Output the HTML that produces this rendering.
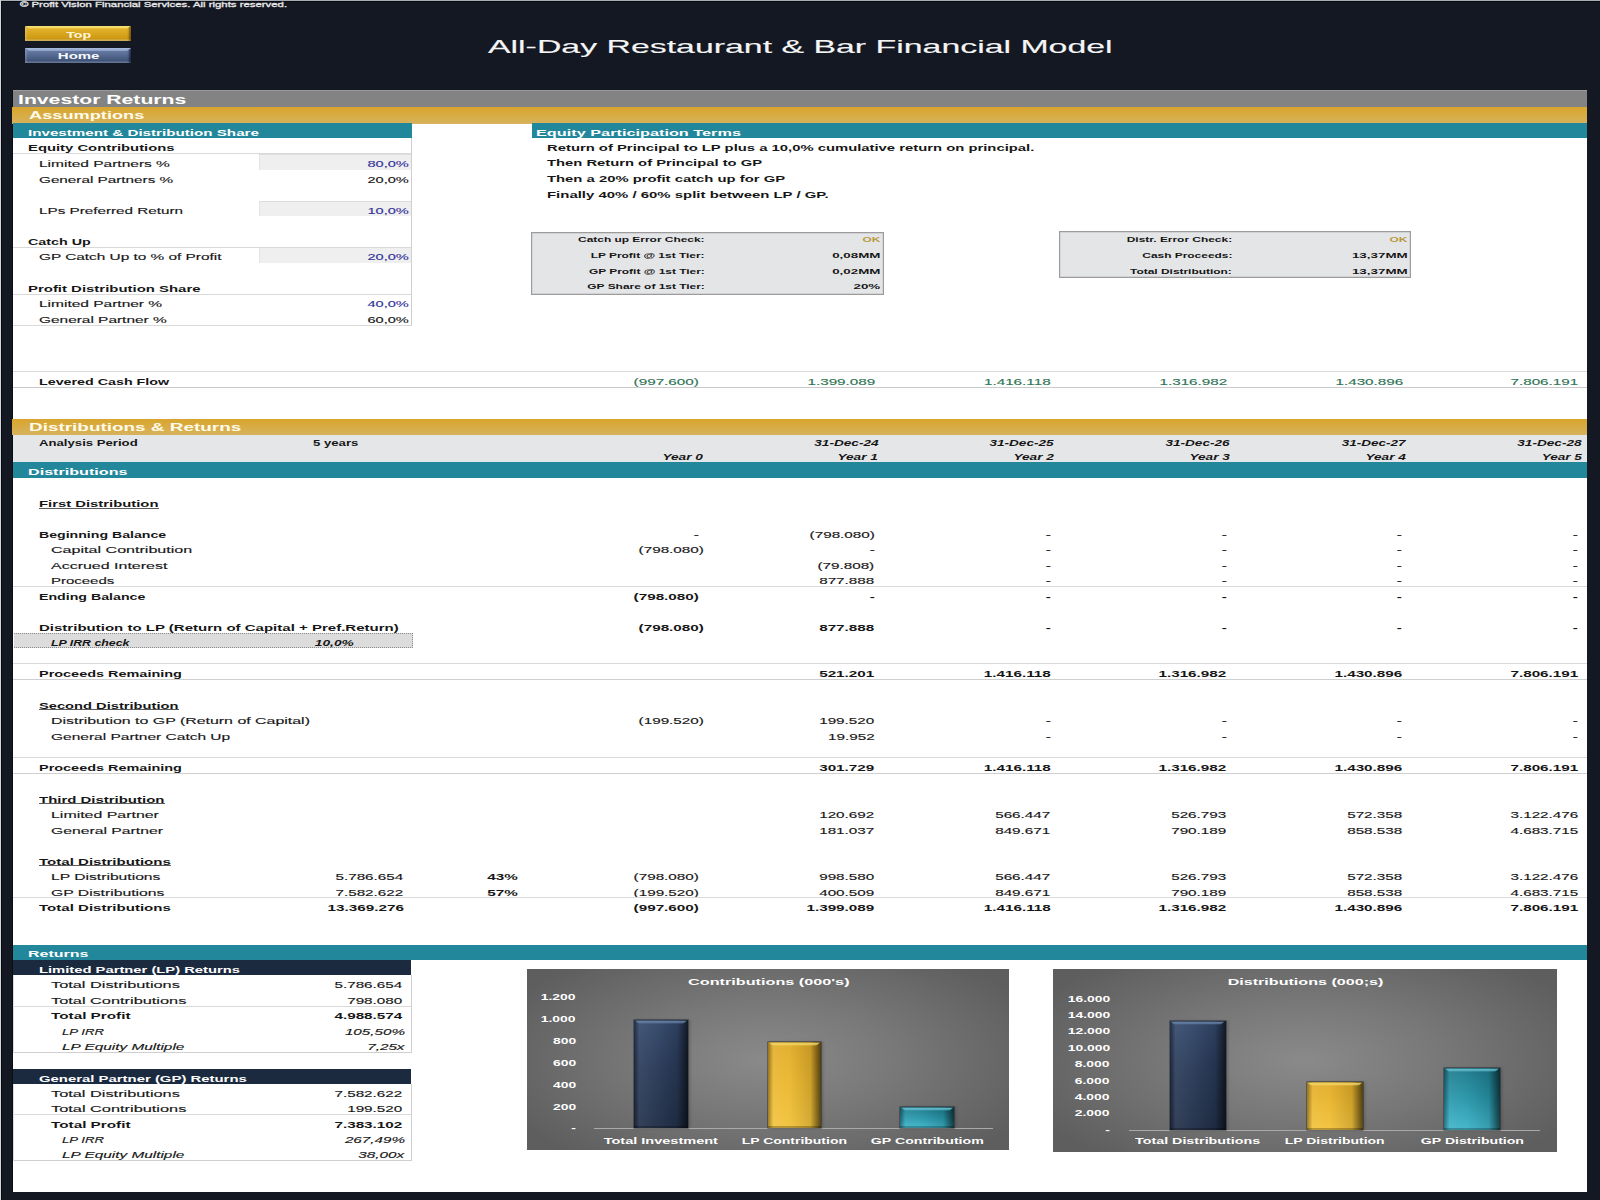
<!DOCTYPE html>
<html><head><meta charset="utf-8"><title>Investor Returns</title>
<style>
html,body{margin:0;padding:0;}
body{width:1600px;height:1200px;overflow:hidden;position:relative;background:#141822;font-family:"Liberation Sans",sans-serif;}
.t{position:absolute;white-space:nowrap;line-height:1;}
.r{position:absolute;}
</style></head><body>
<div class="r" style="left:0.00px;top:0.00px;width:1600.00px;height:1.00px;background:#a9adb4;"></div>
<div class="r" style="left:0.00px;top:1.00px;width:1600.00px;height:1.00px;background:#080b12;"></div>
<div class="r" style="left:0.00px;top:0.00px;width:1.00px;height:1200.00px;background:#d2d5da;"></div>
<div class="r" style="left:1.00px;top:1.00px;width:1.00px;height:1199.00px;background:#070a10;"></div>
<div class="r" style="left:12.00px;top:89.70px;width:1.00px;height:1102.20px;background:#090c12;"></div>
<div class="t" style="left:19.50px;transform-origin:0 0;transform:scaleX(1.5806);top:1.28px;font-size:7.2px;font-weight:normal;font-style:normal;color:#e6e6e6;-webkit-text-stroke:0.12px currentColor;-webkit-text-stroke:0.3px #e6e6e6;">© Profit Vision Financial Services. All rights reserved.</div>
<div class="r" style="left:25px;top:25.6px;width:106px;height:15.0px;background:linear-gradient(#e6b93a 0%,#dcaa22 40%,#cf9a14 80%,#b88a10 100%);box-shadow:inset -2px 0 2px rgba(60,40,0,0.6), inset 2px 0 1px rgba(255,255,255,0.15), inset 0 -1.5px 0 rgba(240,210,120,0.8);overflow:hidden"><div style="position:absolute;left:0;top:0;width:100%;height:3px;background:linear-gradient(#f7e27a,#efcc4c);clip-path:polygon(0 0,100% 0,calc(100% - 4px) 100%,4px 100%)"></div></div>
<div class="r" style="left:25px;top:48.1px;width:106px;height:15.399999999999999px;background:linear-gradient(#6f84ac 0%,#5a6e96 40%,#44577c 80%,#34435f 100%);box-shadow:inset -2px 0 2px rgba(0,10,30,0.6), inset 2px 0 1px rgba(255,255,255,0.15), inset 0 -1.5px 0 rgba(140,160,200,0.7);overflow:hidden"><div style="position:absolute;left:0;top:0;width:100%;height:3px;background:linear-gradient(#aabbdd,#8a9ec6);clip-path:polygon(0 0,100% 0,calc(100% - 4px) 100%,4px 100%)"></div></div>
<div class="t" style="left:69.78px;transform-origin:8.62px 0;transform:scaleX(1.4494);top:30.07px;font-size:9.8px;font-weight:bold;font-style:normal;color:#fff6da;">Top</div>
<div class="t" style="left:64.68px;transform-origin:13.62px 0;transform:scaleX(1.5269);top:51.07px;font-size:9.8px;font-weight:bold;font-style:normal;color:#f6f8fc;">Home</div>
<div class="t" style="left:488.00px;transform-origin:0 0;transform:scaleX(1.8920);top:39.19px;font-size:17.9px;font-weight:normal;font-style:normal;color:#f5f5f5;-webkit-text-stroke:0.12px currentColor;">All-Day Restaurant &amp; Bar Financial Model</div>
<div class="r" style="left:13.00px;top:90.50px;width:1574.00px;height:1101.40px;background:#ffffff;"></div>
<div class="r" style="left:13.00px;top:89.70px;width:1574.00px;height:17.50px;background:#838383;box-shadow:inset 0 1px 0 #9a9a9a"></div>
<div class="t" style="left:17.70px;transform-origin:0 0;transform:scaleX(1.7653);top:93.50px;font-size:12px;font-weight:bold;font-style:normal;color:#ffffff;">Investor Returns</div>
<div class="r" style="left:11.50px;top:106.50px;width:1575.50px;height:17.00px;background:linear-gradient(#d9a52c,#d6b35e);"></div>
<div class="t" style="left:28.50px;transform-origin:0 0;transform:scaleX(1.7875);top:111.03px;font-size:10.2px;font-weight:bold;font-style:normal;color:#fffbe8;">Assumptions</div>
<div class="r" style="left:13.00px;top:122.80px;width:398.50px;height:15.20px;background:#22879a;"></div>
<div class="r" style="left:531.50px;top:122.80px;width:1055.50px;height:15.20px;background:#22879a;"></div>
<div class="t" style="left:27.80px;transform-origin:0 0;transform:scaleX(1.7241);top:128.62px;font-size:8.8px;font-weight:bold;font-style:normal;color:#ffffff;">Investment &amp; Distribution Share</div>
<div class="t" style="left:535.60px;transform-origin:0 0;transform:scaleX(1.8496);top:128.52px;font-size:8.8px;font-weight:bold;font-style:normal;color:#ffffff;">Equity Participation Terms</div>
<div class="r" style="left:259.00px;top:153.80px;width:152.00px;height:15.97px;background:#efefef;box-shadow:inset 0 1px 0 #dedede, inset 1px 0 0 #e4e4e4"></div>
<div class="r" style="left:259.00px;top:200.51px;width:152.00px;height:15.97px;background:#efefef;box-shadow:inset 0 1px 0 #dedede, inset 1px 0 0 #e4e4e4"></div>
<div class="r" style="left:259.00px;top:247.22px;width:152.00px;height:15.97px;background:#efefef;box-shadow:inset 0 1px 0 #dedede, inset 1px 0 0 #e4e4e4"></div>
<div class="r" style="left:13.00px;top:153.20px;width:398.50px;height:1.00px;background:#d9d9d9;"></div>
<div class="r" style="left:13.00px;top:246.60px;width:398.50px;height:1.00px;background:#d9d9d9;"></div>
<div class="r" style="left:13.00px;top:293.50px;width:398.50px;height:1.00px;background:#d9d9d9;"></div>
<div class="r" style="left:13.00px;top:324.50px;width:398.50px;height:1.00px;background:#d9d9d9;"></div>
<div class="r" style="left:411.00px;top:138.00px;width:1.00px;height:187.50px;background:#cfcfcf;"></div>
<div class="t" style="left:27.60px;transform-origin:0 0;transform:scaleX(1.7695);top:144.46px;font-size:8.4px;font-weight:bold;font-style:normal;color:#161616;">Equity Contributions</div>
<div class="t" style="left:38.80px;transform-origin:0 0;transform:scaleX(1.8498);top:160.03px;font-size:8.4px;font-weight:normal;font-style:normal;color:#161616;-webkit-text-stroke:0.12px currentColor;">Limited Partners %</div>
<div class="t" style="left:38.80px;transform-origin:0 0;transform:scaleX(1.8237);top:175.60px;font-size:8.4px;font-weight:normal;font-style:normal;color:#161616;-webkit-text-stroke:0.12px currentColor;">General Partners %</div>
<div class="t" style="left:38.80px;transform-origin:0 0;transform:scaleX(1.8204);top:206.74px;font-size:8.4px;font-weight:normal;font-style:normal;color:#161616;-webkit-text-stroke:0.12px currentColor;">LPs Preferred Return</div>
<div class="t" style="left:27.60px;transform-origin:0 0;transform:scaleX(1.7084);top:237.88px;font-size:8.4px;font-weight:bold;font-style:normal;color:#161616;">Catch Up</div>
<div class="t" style="left:38.80px;transform-origin:0 0;transform:scaleX(1.8346);top:253.45px;font-size:8.4px;font-weight:normal;font-style:normal;color:#161616;-webkit-text-stroke:0.12px currentColor;">GP Catch Up to % of Profit</div>
<div class="t" style="left:27.60px;transform-origin:0 0;transform:scaleX(1.7824);top:284.59px;font-size:8.4px;font-weight:bold;font-style:normal;color:#161616;">Profit Distribution Share</div>
<div class="t" style="left:38.80px;transform-origin:0 0;transform:scaleX(1.8494);top:300.16px;font-size:8.4px;font-weight:normal;font-style:normal;color:#161616;-webkit-text-stroke:0.12px currentColor;">Limited Partner %</div>
<div class="t" style="left:38.80px;transform-origin:0 0;transform:scaleX(1.8403);top:315.73px;font-size:8.4px;font-weight:normal;font-style:normal;color:#161616;-webkit-text-stroke:0.12px currentColor;">General Partner %</div>
<div class="t" style="right:1191.29px;transform-origin:100% 0;transform:scaleX(1.7400);top:160.03px;font-size:8.4px;font-weight:normal;font-style:normal;color:#33339a;-webkit-text-stroke:0.12px currentColor;">80,0%</div>
<div class="t" style="right:1191.29px;transform-origin:100% 0;transform:scaleX(1.7400);top:175.60px;font-size:8.4px;font-weight:normal;font-style:normal;color:#161616;-webkit-text-stroke:0.12px currentColor;">20,0%</div>
<div class="t" style="right:1191.29px;transform-origin:100% 0;transform:scaleX(1.7400);top:206.74px;font-size:8.4px;font-weight:normal;font-style:normal;color:#33339a;-webkit-text-stroke:0.12px currentColor;">10,0%</div>
<div class="t" style="right:1191.29px;transform-origin:100% 0;transform:scaleX(1.7400);top:253.45px;font-size:8.4px;font-weight:normal;font-style:normal;color:#33339a;-webkit-text-stroke:0.12px currentColor;">20,0%</div>
<div class="t" style="right:1191.29px;transform-origin:100% 0;transform:scaleX(1.7400);top:300.16px;font-size:8.4px;font-weight:normal;font-style:normal;color:#33339a;-webkit-text-stroke:0.12px currentColor;">40,0%</div>
<div class="t" style="right:1191.29px;transform-origin:100% 0;transform:scaleX(1.7400);top:315.73px;font-size:8.4px;font-weight:normal;font-style:normal;color:#161616;-webkit-text-stroke:0.12px currentColor;">60,0%</div>
<div class="t" style="left:546.90px;transform-origin:0 0;transform:scaleX(1.7697);top:143.86px;font-size:8.4px;font-weight:bold;font-style:normal;color:#161616;">Return of Principal to LP plus a 10,0% cumulative return on principal.</div>
<div class="t" style="left:546.90px;transform-origin:0 0;transform:scaleX(1.7642);top:159.46px;font-size:8.4px;font-weight:bold;font-style:normal;color:#161616;">Then Return of Principal to GP</div>
<div class="t" style="left:546.90px;transform-origin:0 0;transform:scaleX(1.7701);top:175.06px;font-size:8.4px;font-weight:bold;font-style:normal;color:#161616;">Then a 20% profit catch up for GP</div>
<div class="t" style="left:546.90px;transform-origin:0 0;transform:scaleX(1.7826);top:190.66px;font-size:8.4px;font-weight:bold;font-style:normal;color:#161616;">Finally 40% / 60% split between LP / GP.</div>
<div class="r" style="left:531.40px;top:231.60px;width:352.60px;height:63.00px;background:#e4e5e7;box-shadow:inset 0 0 0 1.2px #9c9c9c"></div>
<div class="t" style="right:895.52px;transform-origin:100% 0;transform:scaleX(1.5700);top:236.14px;font-size:7.6px;font-weight:bold;font-style:normal;color:#161616;">Catch up Error Check:</div>
<div class="t" style="right:719.60px;transform-origin:100% 0;transform:scaleX(1.5700);top:236.14px;font-size:7.6px;font-weight:bold;font-style:normal;color:#bb9a3c;">OK</div>
<div class="t" style="right:895.48px;transform-origin:100% 0;transform:scaleX(1.5700);top:251.89px;font-size:7.6px;font-weight:bold;font-style:normal;color:#161616;">LP Profit @ 1st Tier:</div>
<div class="t" style="right:719.57px;transform-origin:100% 0;transform:scaleX(1.7600);top:251.89px;font-size:7.6px;font-weight:bold;font-style:normal;color:#161616;">0,08MM</div>
<div class="t" style="right:895.52px;transform-origin:100% 0;transform:scaleX(1.5700);top:267.64px;font-size:7.6px;font-weight:bold;font-style:normal;color:#161616;">GP Profit @ 1st Tier:</div>
<div class="t" style="right:719.57px;transform-origin:100% 0;transform:scaleX(1.7600);top:267.64px;font-size:7.6px;font-weight:bold;font-style:normal;color:#161616;">0,02MM</div>
<div class="t" style="right:895.49px;transform-origin:100% 0;transform:scaleX(1.5700);top:283.39px;font-size:7.6px;font-weight:bold;font-style:normal;color:#161616;">GP Share of 1st Tier:</div>
<div class="t" style="right:719.58px;transform-origin:100% 0;transform:scaleX(1.7600);top:283.39px;font-size:7.6px;font-weight:bold;font-style:normal;color:#161616;">20%</div>
<div class="r" style="left:1058.80px;top:231.20px;width:352.10px;height:46.80px;background:#e4e5e7;box-shadow:inset 0 0 0 1.2px #9c9c9c"></div>
<div class="t" style="right:367.78px;transform-origin:100% 0;transform:scaleX(1.5700);top:235.94px;font-size:7.6px;font-weight:bold;font-style:normal;color:#161616;">Distr. Error Check:</div>
<div class="t" style="right:192.50px;transform-origin:100% 0;transform:scaleX(1.5700);top:235.94px;font-size:7.6px;font-weight:bold;font-style:normal;color:#bb9a3c;">OK</div>
<div class="t" style="right:367.81px;transform-origin:100% 0;transform:scaleX(1.5700);top:251.74px;font-size:7.6px;font-weight:bold;font-style:normal;color:#161616;">Cash Proceeds:</div>
<div class="t" style="right:192.52px;transform-origin:100% 0;transform:scaleX(1.7600);top:251.74px;font-size:7.6px;font-weight:bold;font-style:normal;color:#161616;">13,37MM</div>
<div class="t" style="right:367.79px;transform-origin:100% 0;transform:scaleX(1.5700);top:267.54px;font-size:7.6px;font-weight:bold;font-style:normal;color:#161616;">Total Distribution:</div>
<div class="t" style="right:192.52px;transform-origin:100% 0;transform:scaleX(1.7600);top:267.54px;font-size:7.6px;font-weight:bold;font-style:normal;color:#161616;">13,37MM</div>
<div class="r" style="left:13.00px;top:371.10px;width:1574.00px;height:1.00px;background:#d9d9d9;"></div>
<div class="r" style="left:13.00px;top:386.90px;width:1574.00px;height:1.40px;background:#c9c9c9;"></div>
<div class="t" style="left:38.80px;transform-origin:0 0;transform:scaleX(1.7044);top:377.86px;font-size:8.4px;font-weight:bold;font-style:normal;color:#161616;">Levered Cash Flow</div>
<div class="t" style="right:901.49px;transform-origin:100% 0;transform:scaleX(1.8200);top:377.86px;font-size:8.4px;font-weight:normal;font-style:normal;color:#2f7454;-webkit-text-stroke:0.12px currentColor;">(997.600)</div>
<div class="t" style="right:725.02px;transform-origin:100% 0;transform:scaleX(1.8200);top:377.86px;font-size:8.4px;font-weight:normal;font-style:normal;color:#2f7454;-webkit-text-stroke:0.12px currentColor;">1.399.089</div>
<div class="t" style="right:549.01px;transform-origin:100% 0;transform:scaleX(1.8200);top:377.86px;font-size:8.4px;font-weight:normal;font-style:normal;color:#2f7454;-webkit-text-stroke:0.12px currentColor;">1.416.118</div>
<div class="t" style="right:373.02px;transform-origin:100% 0;transform:scaleX(1.8200);top:377.86px;font-size:8.4px;font-weight:normal;font-style:normal;color:#2f7454;-webkit-text-stroke:0.12px currentColor;">1.316.982</div>
<div class="t" style="right:197.22px;transform-origin:100% 0;transform:scaleX(1.8200);top:377.86px;font-size:8.4px;font-weight:normal;font-style:normal;color:#2f7454;-webkit-text-stroke:0.12px currentColor;">1.430.896</div>
<div class="t" style="right:21.32px;transform-origin:100% 0;transform:scaleX(1.8200);top:377.86px;font-size:8.4px;font-weight:normal;font-style:normal;color:#2f7454;-webkit-text-stroke:0.12px currentColor;">7.806.191</div>
<div class="r" style="left:11.50px;top:418.50px;width:1575.50px;height:16.50px;background:linear-gradient(#d9a52c,#d6b35e);"></div>
<div class="t" style="left:28.50px;transform-origin:0 0;transform:scaleX(1.8560);top:422.73px;font-size:10.2px;font-weight:bold;font-style:normal;color:#fffbe8;">Distributions &amp; Returns</div>
<div class="r" style="left:13.00px;top:434.50px;width:1574.00px;height:27.50px;background:#e5e6e8;"></div>
<div class="t" style="left:39.20px;transform-origin:0 0;transform:scaleX(1.5704);top:439.06px;font-size:8.4px;font-weight:bold;font-style:normal;color:#161616;">Analysis Period</div>
<div class="t" style="left:313.00px;transform-origin:0 0;transform:scaleX(1.5700);top:439.26px;font-size:8.4px;font-weight:bold;font-style:normal;color:#161616;">5 years</div>
<div class="t" style="right:721.70px;transform-origin:100% 0;transform:scaleX(1.6251);top:438.56px;font-size:8.4px;font-weight:bold;font-style:italic;color:#161616;">31-Dec-24</div>
<div class="t" style="right:546.20px;transform-origin:100% 0;transform:scaleX(1.6200);top:438.56px;font-size:8.4px;font-weight:bold;font-style:italic;color:#161616;">31-Dec-25</div>
<div class="t" style="right:370.13px;transform-origin:100% 0;transform:scaleX(1.6217);top:438.56px;font-size:8.4px;font-weight:bold;font-style:italic;color:#161616;">31-Dec-26</div>
<div class="t" style="right:194.60px;transform-origin:100% 0;transform:scaleX(1.6098);top:438.56px;font-size:8.4px;font-weight:bold;font-style:italic;color:#161616;">31-Dec-27</div>
<div class="t" style="right:18.30px;transform-origin:100% 0;transform:scaleX(1.6251);top:438.56px;font-size:8.4px;font-weight:bold;font-style:italic;color:#161616;">31-Dec-28</div>
<div class="t" style="right:897.19px;transform-origin:100% 0;transform:scaleX(1.6261);top:452.66px;font-size:8.4px;font-weight:bold;font-style:italic;color:#161616;">Year 0</div>
<div class="t" style="right:721.69px;transform-origin:100% 0;transform:scaleX(1.6261);top:452.66px;font-size:8.4px;font-weight:bold;font-style:italic;color:#161616;">Year 1</div>
<div class="t" style="right:545.99px;transform-origin:100% 0;transform:scaleX(1.6261);top:452.66px;font-size:8.4px;font-weight:bold;font-style:italic;color:#161616;">Year 2</div>
<div class="t" style="right:369.99px;transform-origin:100% 0;transform:scaleX(1.6261);top:452.66px;font-size:8.4px;font-weight:bold;font-style:italic;color:#161616;">Year 3</div>
<div class="t" style="right:193.99px;transform-origin:100% 0;transform:scaleX(1.6261);top:452.66px;font-size:8.4px;font-weight:bold;font-style:italic;color:#161616;">Year 4</div>
<div class="t" style="right:18.50px;transform-origin:100% 0;transform:scaleX(1.6179);top:452.66px;font-size:8.4px;font-weight:bold;font-style:italic;color:#161616;">Year 5</div>
<div class="r" style="left:13.00px;top:461.60px;width:1574.00px;height:16.40px;background:#22879a;"></div>
<div class="t" style="left:28.20px;transform-origin:0 0;transform:scaleX(1.8340);top:467.92px;font-size:8.8px;font-weight:bold;font-style:normal;color:#ffffff;">Distributions</div>
<div class="t" style="left:39.20px;transform-origin:0 0;transform:scaleX(1.7706);top:499.96px;font-size:8.4px;font-weight:bold;font-style:normal;color:#161616;">First Distribution</div>
<div class="r" style="left:39.20px;top:507.55px;width:119.80px;height:0.90px;background:#5a5a5a;"></div>
<div class="t" style="left:39.20px;transform-origin:0 0;transform:scaleX(1.6865);top:531.06px;font-size:8.4px;font-weight:bold;font-style:normal;color:#161616;">Beginning Balance</div>
<div class="t" style="right:901.63px;transform-origin:100% 0;transform:scaleX(1.8200);top:531.06px;font-size:8.4px;font-weight:normal;font-style:normal;color:#161616;-webkit-text-stroke:0.12px currentColor;">-</div>
<div class="t" style="right:725.39px;transform-origin:100% 0;transform:scaleX(1.8200);top:531.06px;font-size:8.4px;font-weight:normal;font-style:normal;color:#161616;-webkit-text-stroke:0.12px currentColor;">(798.080)</div>
<div class="t" style="right:549.53px;transform-origin:100% 0;transform:scaleX(1.8200);top:531.06px;font-size:8.4px;font-weight:normal;font-style:normal;color:#161616;-webkit-text-stroke:0.12px currentColor;">-</div>
<div class="t" style="right:373.53px;transform-origin:100% 0;transform:scaleX(1.8200);top:531.06px;font-size:8.4px;font-weight:normal;font-style:normal;color:#161616;-webkit-text-stroke:0.12px currentColor;">-</div>
<div class="t" style="right:197.73px;transform-origin:100% 0;transform:scaleX(1.8200);top:531.06px;font-size:8.4px;font-weight:normal;font-style:normal;color:#161616;-webkit-text-stroke:0.12px currentColor;">-</div>
<div class="t" style="right:21.73px;transform-origin:100% 0;transform:scaleX(1.8200);top:531.06px;font-size:8.4px;font-weight:normal;font-style:normal;color:#161616;-webkit-text-stroke:0.12px currentColor;">-</div>
<div class="t" style="left:50.80px;transform-origin:0 0;transform:scaleX(1.9202);top:546.26px;font-size:8.4px;font-weight:normal;font-style:normal;color:#161616;-webkit-text-stroke:0.12px currentColor;">Capital Contribution</div>
<div class="t" style="right:895.99px;transform-origin:100% 0;transform:scaleX(1.8200);top:546.26px;font-size:8.4px;font-weight:normal;font-style:normal;color:#161616;-webkit-text-stroke:0.12px currentColor;">(798.080)</div>
<div class="t" style="right:725.43px;transform-origin:100% 0;transform:scaleX(1.8200);top:546.26px;font-size:8.4px;font-weight:normal;font-style:normal;color:#161616;-webkit-text-stroke:0.12px currentColor;">-</div>
<div class="t" style="right:549.53px;transform-origin:100% 0;transform:scaleX(1.8200);top:546.26px;font-size:8.4px;font-weight:normal;font-style:normal;color:#161616;-webkit-text-stroke:0.12px currentColor;">-</div>
<div class="t" style="right:373.53px;transform-origin:100% 0;transform:scaleX(1.8200);top:546.26px;font-size:8.4px;font-weight:normal;font-style:normal;color:#161616;-webkit-text-stroke:0.12px currentColor;">-</div>
<div class="t" style="right:197.73px;transform-origin:100% 0;transform:scaleX(1.8200);top:546.26px;font-size:8.4px;font-weight:normal;font-style:normal;color:#161616;-webkit-text-stroke:0.12px currentColor;">-</div>
<div class="t" style="right:21.73px;transform-origin:100% 0;transform:scaleX(1.8200);top:546.26px;font-size:8.4px;font-weight:normal;font-style:normal;color:#161616;-webkit-text-stroke:0.12px currentColor;">-</div>
<div class="t" style="left:50.80px;transform-origin:0 0;transform:scaleX(1.9084);top:561.66px;font-size:8.4px;font-weight:normal;font-style:normal;color:#161616;-webkit-text-stroke:0.12px currentColor;">Accrued Interest</div>
<div class="t" style="right:725.40px;transform-origin:100% 0;transform:scaleX(1.8200);top:561.66px;font-size:8.4px;font-weight:normal;font-style:normal;color:#161616;-webkit-text-stroke:0.12px currentColor;">(79.808)</div>
<div class="t" style="right:549.53px;transform-origin:100% 0;transform:scaleX(1.8200);top:561.66px;font-size:8.4px;font-weight:normal;font-style:normal;color:#161616;-webkit-text-stroke:0.12px currentColor;">-</div>
<div class="t" style="right:373.53px;transform-origin:100% 0;transform:scaleX(1.8200);top:561.66px;font-size:8.4px;font-weight:normal;font-style:normal;color:#161616;-webkit-text-stroke:0.12px currentColor;">-</div>
<div class="t" style="right:197.73px;transform-origin:100% 0;transform:scaleX(1.8200);top:561.66px;font-size:8.4px;font-weight:normal;font-style:normal;color:#161616;-webkit-text-stroke:0.12px currentColor;">-</div>
<div class="t" style="right:21.73px;transform-origin:100% 0;transform:scaleX(1.8200);top:561.66px;font-size:8.4px;font-weight:normal;font-style:normal;color:#161616;-webkit-text-stroke:0.12px currentColor;">-</div>
<div class="t" style="left:50.80px;transform-origin:0 0;transform:scaleX(1.7864);top:577.06px;font-size:8.4px;font-weight:normal;font-style:normal;color:#161616;-webkit-text-stroke:0.12px currentColor;">Proceeds</div>
<div class="t" style="right:725.40px;transform-origin:100% 0;transform:scaleX(1.8200);top:577.06px;font-size:8.4px;font-weight:normal;font-style:normal;color:#161616;-webkit-text-stroke:0.12px currentColor;">877.888</div>
<div class="t" style="right:549.53px;transform-origin:100% 0;transform:scaleX(1.8200);top:577.06px;font-size:8.4px;font-weight:normal;font-style:normal;color:#161616;-webkit-text-stroke:0.12px currentColor;">-</div>
<div class="t" style="right:373.53px;transform-origin:100% 0;transform:scaleX(1.8200);top:577.06px;font-size:8.4px;font-weight:normal;font-style:normal;color:#161616;-webkit-text-stroke:0.12px currentColor;">-</div>
<div class="t" style="right:197.73px;transform-origin:100% 0;transform:scaleX(1.8200);top:577.06px;font-size:8.4px;font-weight:normal;font-style:normal;color:#161616;-webkit-text-stroke:0.12px currentColor;">-</div>
<div class="t" style="right:21.73px;transform-origin:100% 0;transform:scaleX(1.8200);top:577.06px;font-size:8.4px;font-weight:normal;font-style:normal;color:#161616;-webkit-text-stroke:0.12px currentColor;">-</div>
<div class="r" style="left:13.00px;top:585.90px;width:1574.00px;height:1.00px;background:#d9d9d9;"></div>
<div class="t" style="left:39.20px;transform-origin:0 0;transform:scaleX(1.6921);top:592.66px;font-size:8.4px;font-weight:bold;font-style:normal;color:#161616;">Ending Balance</div>
<div class="t" style="right:900.69px;transform-origin:100% 0;transform:scaleX(1.8200);top:592.66px;font-size:8.4px;font-weight:bold;font-style:normal;color:#161616;">(798.080)</div>
<div class="t" style="right:725.43px;transform-origin:100% 0;transform:scaleX(1.8200);top:592.66px;font-size:8.4px;font-weight:bold;font-style:normal;color:#161616;">-</div>
<div class="t" style="right:549.53px;transform-origin:100% 0;transform:scaleX(1.8200);top:592.66px;font-size:8.4px;font-weight:bold;font-style:normal;color:#161616;">-</div>
<div class="t" style="right:373.53px;transform-origin:100% 0;transform:scaleX(1.8200);top:592.66px;font-size:8.4px;font-weight:bold;font-style:normal;color:#161616;">-</div>
<div class="t" style="right:197.73px;transform-origin:100% 0;transform:scaleX(1.8200);top:592.66px;font-size:8.4px;font-weight:bold;font-style:normal;color:#161616;">-</div>
<div class="t" style="right:21.73px;transform-origin:100% 0;transform:scaleX(1.8200);top:592.66px;font-size:8.4px;font-weight:bold;font-style:normal;color:#161616;">-</div>
<div class="t" style="left:39.20px;transform-origin:0 0;transform:scaleX(1.7930);top:623.66px;font-size:8.4px;font-weight:bold;font-style:normal;color:#161616;">Distribution to LP (Return of Capital + Pref.Return)</div>
<div class="t" style="right:895.69px;transform-origin:100% 0;transform:scaleX(1.8200);top:623.66px;font-size:8.4px;font-weight:bold;font-style:normal;color:#161616;">(798.080)</div>
<div class="t" style="right:725.40px;transform-origin:100% 0;transform:scaleX(1.8200);top:623.66px;font-size:8.4px;font-weight:bold;font-style:normal;color:#161616;">877.888</div>
<div class="t" style="right:549.53px;transform-origin:100% 0;transform:scaleX(1.8200);top:623.66px;font-size:8.4px;font-weight:bold;font-style:normal;color:#161616;">-</div>
<div class="t" style="right:373.53px;transform-origin:100% 0;transform:scaleX(1.8200);top:623.66px;font-size:8.4px;font-weight:bold;font-style:normal;color:#161616;">-</div>
<div class="t" style="right:197.73px;transform-origin:100% 0;transform:scaleX(1.8200);top:623.66px;font-size:8.4px;font-weight:bold;font-style:normal;color:#161616;">-</div>
<div class="t" style="right:21.73px;transform-origin:100% 0;transform:scaleX(1.8200);top:623.66px;font-size:8.4px;font-weight:bold;font-style:normal;color:#161616;">-</div>
<div class="r" style="left:13.50px;top:633.00px;width:399.00px;height:15.20px;background:#dcdcdc;border-top:1px dotted #8a8a8a;border-bottom:1px dotted #8a8a8a;border-right:1px dotted #8a8a8a;box-sizing:border-box"></div>
<div class="t" style="left:50.80px;transform-origin:0 0;transform:scaleX(1.4732);top:638.86px;font-size:8.4px;font-weight:bold;font-style:italic;color:#161616;">LP IRR check</div>
<div class="t" style="right:1245.99px;transform-origin:100% 0;transform:scaleX(1.6377);top:638.86px;font-size:8.4px;font-weight:bold;font-style:italic;color:#161616;">10,0%</div>
<div class="r" style="left:13.00px;top:663.30px;width:1574.00px;height:1.00px;background:#d9d9d9;"></div>
<div class="t" style="left:39.20px;transform-origin:0 0;transform:scaleX(1.7249);top:669.96px;font-size:8.4px;font-weight:bold;font-style:normal;color:#161616;">Proceeds Remaining</div>
<div class="t" style="right:725.40px;transform-origin:100% 0;transform:scaleX(1.8200);top:669.96px;font-size:8.4px;font-weight:bold;font-style:normal;color:#161616;">521.201</div>
<div class="t" style="right:549.52px;transform-origin:100% 0;transform:scaleX(1.8200);top:669.96px;font-size:8.4px;font-weight:bold;font-style:normal;color:#161616;">1.416.118</div>
<div class="t" style="right:373.52px;transform-origin:100% 0;transform:scaleX(1.8200);top:669.96px;font-size:8.4px;font-weight:bold;font-style:normal;color:#161616;">1.316.982</div>
<div class="t" style="right:197.72px;transform-origin:100% 0;transform:scaleX(1.8200);top:669.96px;font-size:8.4px;font-weight:bold;font-style:normal;color:#161616;">1.430.896</div>
<div class="t" style="right:21.72px;transform-origin:100% 0;transform:scaleX(1.8200);top:669.96px;font-size:8.4px;font-weight:bold;font-style:normal;color:#161616;">7.806.191</div>
<div class="r" style="left:13.00px;top:679.30px;width:1574.00px;height:1.00px;background:#cfcfcf;"></div>
<div class="t" style="left:39.20px;transform-origin:0 0;transform:scaleX(1.7519);top:701.76px;font-size:8.4px;font-weight:bold;font-style:normal;color:#161616;">Second Distribution</div>
<div class="r" style="left:39.20px;top:709.35px;width:139.80px;height:0.90px;background:#5a5a5a;"></div>
<div class="t" style="left:50.80px;transform-origin:0 0;transform:scaleX(1.9008);top:717.26px;font-size:8.4px;font-weight:normal;font-style:normal;color:#161616;-webkit-text-stroke:0.12px currentColor;">Distribution to GP (Return of Capital)</div>
<div class="t" style="right:895.99px;transform-origin:100% 0;transform:scaleX(1.8200);top:717.26px;font-size:8.4px;font-weight:normal;font-style:normal;color:#161616;-webkit-text-stroke:0.12px currentColor;">(199.520)</div>
<div class="t" style="right:725.40px;transform-origin:100% 0;transform:scaleX(1.8200);top:717.26px;font-size:8.4px;font-weight:normal;font-style:normal;color:#161616;-webkit-text-stroke:0.12px currentColor;">199.520</div>
<div class="t" style="right:549.53px;transform-origin:100% 0;transform:scaleX(1.8200);top:717.26px;font-size:8.4px;font-weight:normal;font-style:normal;color:#161616;-webkit-text-stroke:0.12px currentColor;">-</div>
<div class="t" style="right:373.53px;transform-origin:100% 0;transform:scaleX(1.8200);top:717.26px;font-size:8.4px;font-weight:normal;font-style:normal;color:#161616;-webkit-text-stroke:0.12px currentColor;">-</div>
<div class="t" style="right:197.73px;transform-origin:100% 0;transform:scaleX(1.8200);top:717.26px;font-size:8.4px;font-weight:normal;font-style:normal;color:#161616;-webkit-text-stroke:0.12px currentColor;">-</div>
<div class="t" style="right:21.73px;transform-origin:100% 0;transform:scaleX(1.8200);top:717.26px;font-size:8.4px;font-weight:normal;font-style:normal;color:#161616;-webkit-text-stroke:0.12px currentColor;">-</div>
<div class="t" style="left:50.80px;transform-origin:0 0;transform:scaleX(1.8506);top:732.76px;font-size:8.4px;font-weight:normal;font-style:normal;color:#161616;-webkit-text-stroke:0.12px currentColor;">General Partner Catch Up</div>
<div class="t" style="right:725.42px;transform-origin:100% 0;transform:scaleX(1.8200);top:732.76px;font-size:8.4px;font-weight:normal;font-style:normal;color:#161616;-webkit-text-stroke:0.12px currentColor;">19.952</div>
<div class="t" style="right:549.53px;transform-origin:100% 0;transform:scaleX(1.8200);top:732.76px;font-size:8.4px;font-weight:normal;font-style:normal;color:#161616;-webkit-text-stroke:0.12px currentColor;">-</div>
<div class="t" style="right:373.53px;transform-origin:100% 0;transform:scaleX(1.8200);top:732.76px;font-size:8.4px;font-weight:normal;font-style:normal;color:#161616;-webkit-text-stroke:0.12px currentColor;">-</div>
<div class="t" style="right:197.73px;transform-origin:100% 0;transform:scaleX(1.8200);top:732.76px;font-size:8.4px;font-weight:normal;font-style:normal;color:#161616;-webkit-text-stroke:0.12px currentColor;">-</div>
<div class="t" style="right:21.73px;transform-origin:100% 0;transform:scaleX(1.8200);top:732.76px;font-size:8.4px;font-weight:normal;font-style:normal;color:#161616;-webkit-text-stroke:0.12px currentColor;">-</div>
<div class="r" style="left:13.00px;top:757.00px;width:1574.00px;height:1.00px;background:#d9d9d9;"></div>
<div class="t" style="left:39.20px;transform-origin:0 0;transform:scaleX(1.7249);top:763.76px;font-size:8.4px;font-weight:bold;font-style:normal;color:#161616;">Proceeds Remaining</div>
<div class="t" style="right:725.40px;transform-origin:100% 0;transform:scaleX(1.8200);top:763.76px;font-size:8.4px;font-weight:bold;font-style:normal;color:#161616;">301.729</div>
<div class="t" style="right:549.52px;transform-origin:100% 0;transform:scaleX(1.8200);top:763.76px;font-size:8.4px;font-weight:bold;font-style:normal;color:#161616;">1.416.118</div>
<div class="t" style="right:373.52px;transform-origin:100% 0;transform:scaleX(1.8200);top:763.76px;font-size:8.4px;font-weight:bold;font-style:normal;color:#161616;">1.316.982</div>
<div class="t" style="right:197.72px;transform-origin:100% 0;transform:scaleX(1.8200);top:763.76px;font-size:8.4px;font-weight:bold;font-style:normal;color:#161616;">1.430.896</div>
<div class="t" style="right:21.72px;transform-origin:100% 0;transform:scaleX(1.8200);top:763.76px;font-size:8.4px;font-weight:bold;font-style:normal;color:#161616;">7.806.191</div>
<div class="r" style="left:13.00px;top:773.10px;width:1574.00px;height:1.00px;background:#cfcfcf;"></div>
<div class="t" style="left:39.20px;transform-origin:0 0;transform:scaleX(1.7850);top:795.76px;font-size:8.4px;font-weight:bold;font-style:normal;color:#161616;">Third Distribution</div>
<div class="r" style="left:39.20px;top:803.35px;width:125.80px;height:0.90px;background:#5a5a5a;"></div>
<div class="t" style="left:50.80px;transform-origin:0 0;transform:scaleX(1.8998);top:811.26px;font-size:8.4px;font-weight:normal;font-style:normal;color:#161616;-webkit-text-stroke:0.12px currentColor;">Limited Partner</div>
<div class="t" style="right:725.40px;transform-origin:100% 0;transform:scaleX(1.8200);top:811.26px;font-size:8.4px;font-weight:normal;font-style:normal;color:#161616;-webkit-text-stroke:0.12px currentColor;">120.692</div>
<div class="t" style="right:549.50px;transform-origin:100% 0;transform:scaleX(1.8200);top:811.26px;font-size:8.4px;font-weight:normal;font-style:normal;color:#161616;-webkit-text-stroke:0.12px currentColor;">566.447</div>
<div class="t" style="right:373.50px;transform-origin:100% 0;transform:scaleX(1.8200);top:811.26px;font-size:8.4px;font-weight:normal;font-style:normal;color:#161616;-webkit-text-stroke:0.12px currentColor;">526.793</div>
<div class="t" style="right:197.70px;transform-origin:100% 0;transform:scaleX(1.8200);top:811.26px;font-size:8.4px;font-weight:normal;font-style:normal;color:#161616;-webkit-text-stroke:0.12px currentColor;">572.358</div>
<div class="t" style="right:21.72px;transform-origin:100% 0;transform:scaleX(1.8200);top:811.26px;font-size:8.4px;font-weight:normal;font-style:normal;color:#161616;-webkit-text-stroke:0.12px currentColor;">3.122.476</div>
<div class="t" style="left:50.80px;transform-origin:0 0;transform:scaleX(1.8773);top:826.76px;font-size:8.4px;font-weight:normal;font-style:normal;color:#161616;-webkit-text-stroke:0.12px currentColor;">General Partner</div>
<div class="t" style="right:725.40px;transform-origin:100% 0;transform:scaleX(1.8200);top:826.76px;font-size:8.4px;font-weight:normal;font-style:normal;color:#161616;-webkit-text-stroke:0.12px currentColor;">181.037</div>
<div class="t" style="right:549.50px;transform-origin:100% 0;transform:scaleX(1.8200);top:826.76px;font-size:8.4px;font-weight:normal;font-style:normal;color:#161616;-webkit-text-stroke:0.12px currentColor;">849.671</div>
<div class="t" style="right:373.50px;transform-origin:100% 0;transform:scaleX(1.8200);top:826.76px;font-size:8.4px;font-weight:normal;font-style:normal;color:#161616;-webkit-text-stroke:0.12px currentColor;">790.189</div>
<div class="t" style="right:197.70px;transform-origin:100% 0;transform:scaleX(1.8200);top:826.76px;font-size:8.4px;font-weight:normal;font-style:normal;color:#161616;-webkit-text-stroke:0.12px currentColor;">858.538</div>
<div class="t" style="right:21.72px;transform-origin:100% 0;transform:scaleX(1.8200);top:826.76px;font-size:8.4px;font-weight:normal;font-style:normal;color:#161616;-webkit-text-stroke:0.12px currentColor;">4.683.715</div>
<div class="t" style="left:39.20px;transform-origin:0 0;transform:scaleX(1.7979);top:857.76px;font-size:8.4px;font-weight:bold;font-style:normal;color:#161616;">Total Distributions</div>
<div class="r" style="left:39.20px;top:865.35px;width:132.30px;height:0.90px;background:#5a5a5a;"></div>
<div class="t" style="left:50.80px;transform-origin:0 0;transform:scaleX(1.8697);top:873.26px;font-size:8.4px;font-weight:normal;font-style:normal;color:#161616;-webkit-text-stroke:0.12px currentColor;">LP Distributions</div>
<div class="t" style="right:1196.52px;transform-origin:100% 0;transform:scaleX(1.8200);top:873.26px;font-size:8.4px;font-weight:normal;font-style:normal;color:#161616;-webkit-text-stroke:0.12px currentColor;">5.786.654</div>
<div class="t" style="right:1082.48px;transform-origin:100% 0;transform:scaleX(1.8200);top:873.26px;font-size:8.4px;font-weight:bold;font-style:normal;color:#161616;">43%</div>
<div class="t" style="right:901.49px;transform-origin:100% 0;transform:scaleX(1.8200);top:873.26px;font-size:8.4px;font-weight:normal;font-style:normal;color:#161616;-webkit-text-stroke:0.12px currentColor;">(798.080)</div>
<div class="t" style="right:725.40px;transform-origin:100% 0;transform:scaleX(1.8200);top:873.26px;font-size:8.4px;font-weight:normal;font-style:normal;color:#161616;-webkit-text-stroke:0.12px currentColor;">998.580</div>
<div class="t" style="right:549.50px;transform-origin:100% 0;transform:scaleX(1.8200);top:873.26px;font-size:8.4px;font-weight:normal;font-style:normal;color:#161616;-webkit-text-stroke:0.12px currentColor;">566.447</div>
<div class="t" style="right:373.50px;transform-origin:100% 0;transform:scaleX(1.8200);top:873.26px;font-size:8.4px;font-weight:normal;font-style:normal;color:#161616;-webkit-text-stroke:0.12px currentColor;">526.793</div>
<div class="t" style="right:197.70px;transform-origin:100% 0;transform:scaleX(1.8200);top:873.26px;font-size:8.4px;font-weight:normal;font-style:normal;color:#161616;-webkit-text-stroke:0.12px currentColor;">572.358</div>
<div class="t" style="right:21.72px;transform-origin:100% 0;transform:scaleX(1.8200);top:873.26px;font-size:8.4px;font-weight:normal;font-style:normal;color:#161616;-webkit-text-stroke:0.12px currentColor;">3.122.476</div>
<div class="t" style="left:50.80px;transform-origin:0 0;transform:scaleX(1.8787);top:888.76px;font-size:8.4px;font-weight:normal;font-style:normal;color:#161616;-webkit-text-stroke:0.12px currentColor;">GP Distributions</div>
<div class="t" style="right:1196.52px;transform-origin:100% 0;transform:scaleX(1.8200);top:888.76px;font-size:8.4px;font-weight:normal;font-style:normal;color:#161616;-webkit-text-stroke:0.12px currentColor;">7.582.622</div>
<div class="t" style="right:1082.48px;transform-origin:100% 0;transform:scaleX(1.8200);top:888.76px;font-size:8.4px;font-weight:bold;font-style:normal;color:#161616;">57%</div>
<div class="t" style="right:901.49px;transform-origin:100% 0;transform:scaleX(1.8200);top:888.76px;font-size:8.4px;font-weight:normal;font-style:normal;color:#161616;-webkit-text-stroke:0.12px currentColor;">(199.520)</div>
<div class="t" style="right:725.40px;transform-origin:100% 0;transform:scaleX(1.8200);top:888.76px;font-size:8.4px;font-weight:normal;font-style:normal;color:#161616;-webkit-text-stroke:0.12px currentColor;">400.509</div>
<div class="t" style="right:549.50px;transform-origin:100% 0;transform:scaleX(1.8200);top:888.76px;font-size:8.4px;font-weight:normal;font-style:normal;color:#161616;-webkit-text-stroke:0.12px currentColor;">849.671</div>
<div class="t" style="right:373.50px;transform-origin:100% 0;transform:scaleX(1.8200);top:888.76px;font-size:8.4px;font-weight:normal;font-style:normal;color:#161616;-webkit-text-stroke:0.12px currentColor;">790.189</div>
<div class="t" style="right:197.70px;transform-origin:100% 0;transform:scaleX(1.8200);top:888.76px;font-size:8.4px;font-weight:normal;font-style:normal;color:#161616;-webkit-text-stroke:0.12px currentColor;">858.538</div>
<div class="t" style="right:21.72px;transform-origin:100% 0;transform:scaleX(1.8200);top:888.76px;font-size:8.4px;font-weight:normal;font-style:normal;color:#161616;-webkit-text-stroke:0.12px currentColor;">4.683.715</div>
<div class="r" style="left:13.00px;top:897.10px;width:1574.00px;height:1.00px;background:#d9d9d9;"></div>
<div class="t" style="left:39.20px;transform-origin:0 0;transform:scaleX(1.7979);top:903.86px;font-size:8.4px;font-weight:bold;font-style:normal;color:#161616;">Total Distributions</div>
<div class="t" style="right:1196.50px;transform-origin:100% 0;transform:scaleX(1.8200);top:903.86px;font-size:8.4px;font-weight:bold;font-style:normal;color:#161616;">13.369.276</div>
<div class="t" style="right:901.49px;transform-origin:100% 0;transform:scaleX(1.8200);top:903.86px;font-size:8.4px;font-weight:bold;font-style:normal;color:#161616;">(997.600)</div>
<div class="t" style="right:725.42px;transform-origin:100% 0;transform:scaleX(1.8200);top:903.86px;font-size:8.4px;font-weight:bold;font-style:normal;color:#161616;">1.399.089</div>
<div class="t" style="right:549.52px;transform-origin:100% 0;transform:scaleX(1.8200);top:903.86px;font-size:8.4px;font-weight:bold;font-style:normal;color:#161616;">1.416.118</div>
<div class="t" style="right:373.52px;transform-origin:100% 0;transform:scaleX(1.8200);top:903.86px;font-size:8.4px;font-weight:bold;font-style:normal;color:#161616;">1.316.982</div>
<div class="t" style="right:197.72px;transform-origin:100% 0;transform:scaleX(1.8200);top:903.86px;font-size:8.4px;font-weight:bold;font-style:normal;color:#161616;">1.430.896</div>
<div class="t" style="right:21.72px;transform-origin:100% 0;transform:scaleX(1.8200);top:903.86px;font-size:8.4px;font-weight:bold;font-style:normal;color:#161616;">7.806.191</div>
<div class="r" style="left:13.00px;top:944.60px;width:1574.00px;height:15.30px;background:#22879a;"></div>
<div class="t" style="left:27.90px;transform-origin:0 0;transform:scaleX(1.8158);top:949.52px;font-size:8.8px;font-weight:bold;font-style:normal;color:#ffffff;">Returns</div>
<div class="r" style="left:13.00px;top:960.00px;width:398.40px;height:15.30px;background:#1c2a40;"></div>
<div class="t" style="left:39.00px;transform-origin:0 0;transform:scaleX(1.7628);top:965.96px;font-size:8.4px;font-weight:bold;font-style:normal;color:#ffffff;">Limited Partner (LP) Returns</div>
<div class="t" style="left:51.00px;transform-origin:0 0;transform:scaleX(1.9494);top:981.46px;font-size:8.4px;font-weight:normal;font-style:normal;color:#161616;-webkit-text-stroke:0.12px currentColor;">Total Distributions</div>
<div class="t" style="right:1197.42px;transform-origin:100% 0;transform:scaleX(1.8200);top:981.46px;font-size:8.4px;font-weight:normal;font-style:normal;color:#161616;-webkit-text-stroke:0.12px currentColor;">5.786.654</div>
<div class="t" style="left:51.00px;transform-origin:0 0;transform:scaleX(1.9511);top:996.81px;font-size:8.4px;font-weight:normal;font-style:normal;color:#161616;-webkit-text-stroke:0.12px currentColor;">Total Contributions</div>
<div class="t" style="right:1197.40px;transform-origin:100% 0;transform:scaleX(1.8200);top:996.81px;font-size:8.4px;font-weight:normal;font-style:normal;color:#161616;-webkit-text-stroke:0.12px currentColor;">798.080</div>
<div class="t" style="left:51.00px;transform-origin:0 0;transform:scaleX(1.8252);top:1012.16px;font-size:8.4px;font-weight:bold;font-style:normal;color:#161616;">Total Profit</div>
<div class="t" style="right:1197.42px;transform-origin:100% 0;transform:scaleX(1.8200);top:1012.16px;font-size:8.4px;font-weight:bold;font-style:normal;color:#161616;">4.988.574</div>
<div class="t" style="left:62.30px;transform-origin:0 0;transform:scaleX(1.5773);top:1027.51px;font-size:8.4px;font-weight:normal;font-style:italic;color:#161616;-webkit-text-stroke:0.12px currentColor;">LP IRR</div>
<div class="t" style="right:1195.03px;transform-origin:100% 0;transform:scaleX(1.8200);top:1027.51px;font-size:8.4px;font-weight:normal;font-style:italic;color:#161616;-webkit-text-stroke:0.12px currentColor;">105,50%</div>
<div class="t" style="left:62.30px;transform-origin:0 0;transform:scaleX(1.8339);top:1042.86px;font-size:8.4px;font-weight:normal;font-style:italic;color:#161616;-webkit-text-stroke:0.12px currentColor;">LP Equity Multiple</div>
<div class="t" style="right:1195.44px;transform-origin:100% 0;transform:scaleX(1.8200);top:1042.86px;font-size:8.4px;font-weight:normal;font-style:italic;color:#161616;-webkit-text-stroke:0.12px currentColor;">7,25x</div>
<div class="r" style="left:13.00px;top:1005.65px;width:398.40px;height:1.00px;background:#d9d9d9;"></div>
<div class="r" style="left:13.00px;top:1051.70px;width:398.40px;height:1.00px;background:#cfcfcf;"></div>
<div class="r" style="left:410.90px;top:975.30px;width:1.00px;height:77.50px;background:#cfcfcf;"></div>
<div class="r" style="left:13.10px;top:975.30px;width:1.00px;height:77.50px;background:#dddddd;"></div>
<div class="r" style="left:13.00px;top:1068.60px;width:398.40px;height:15.30px;background:#1c2a40;"></div>
<div class="t" style="left:39.00px;transform-origin:0 0;transform:scaleX(1.7785);top:1074.56px;font-size:8.4px;font-weight:bold;font-style:normal;color:#ffffff;">General Partner (GP) Returns</div>
<div class="t" style="left:51.00px;transform-origin:0 0;transform:scaleX(1.9494);top:1090.06px;font-size:8.4px;font-weight:normal;font-style:normal;color:#161616;-webkit-text-stroke:0.12px currentColor;">Total Distributions</div>
<div class="t" style="right:1197.42px;transform-origin:100% 0;transform:scaleX(1.8200);top:1090.06px;font-size:8.4px;font-weight:normal;font-style:normal;color:#161616;-webkit-text-stroke:0.12px currentColor;">7.582.622</div>
<div class="t" style="left:51.00px;transform-origin:0 0;transform:scaleX(1.9511);top:1105.41px;font-size:8.4px;font-weight:normal;font-style:normal;color:#161616;-webkit-text-stroke:0.12px currentColor;">Total Contributions</div>
<div class="t" style="right:1197.40px;transform-origin:100% 0;transform:scaleX(1.8200);top:1105.41px;font-size:8.4px;font-weight:normal;font-style:normal;color:#161616;-webkit-text-stroke:0.12px currentColor;">199.520</div>
<div class="t" style="left:51.00px;transform-origin:0 0;transform:scaleX(1.8252);top:1120.76px;font-size:8.4px;font-weight:bold;font-style:normal;color:#161616;">Total Profit</div>
<div class="t" style="right:1197.42px;transform-origin:100% 0;transform:scaleX(1.8200);top:1120.76px;font-size:8.4px;font-weight:bold;font-style:normal;color:#161616;">7.383.102</div>
<div class="t" style="left:62.30px;transform-origin:0 0;transform:scaleX(1.5773);top:1136.11px;font-size:8.4px;font-weight:normal;font-style:italic;color:#161616;-webkit-text-stroke:0.12px currentColor;">LP IRR</div>
<div class="t" style="right:1195.03px;transform-origin:100% 0;transform:scaleX(1.8200);top:1136.11px;font-size:8.4px;font-weight:normal;font-style:italic;color:#161616;-webkit-text-stroke:0.12px currentColor;">267,49%</div>
<div class="t" style="left:62.30px;transform-origin:0 0;transform:scaleX(1.8339);top:1151.46px;font-size:8.4px;font-weight:normal;font-style:italic;color:#161616;-webkit-text-stroke:0.12px currentColor;">LP Equity Multiple</div>
<div class="t" style="right:1195.50px;transform-origin:100% 0;transform:scaleX(1.8200);top:1151.46px;font-size:8.4px;font-weight:normal;font-style:italic;color:#161616;-webkit-text-stroke:0.12px currentColor;">38,00x</div>
<div class="r" style="left:13.00px;top:1114.25px;width:398.40px;height:1.00px;background:#d9d9d9;"></div>
<div class="r" style="left:13.00px;top:1160.30px;width:398.40px;height:1.00px;background:#cfcfcf;"></div>
<div class="r" style="left:410.90px;top:1083.90px;width:1.00px;height:77.50px;background:#cfcfcf;"></div>
<div class="r" style="left:13.10px;top:1083.90px;width:1.00px;height:77.50px;background:#dddddd;"></div>
<div class="r" style="left:526.90px;top:968.80px;width:482.50px;height:181.50px;background:radial-gradient(ellipse 60% 70% at 50% 50%, #8a8a8a 0%, #787878 45%, #5e5e5e 100%);"></div>
<div class="t" style="left:724.48px;transform-origin:44.82px 0;transform:scaleX(1.8005);top:977.75px;font-size:9.0px;font-weight:bold;font-style:normal;color:#ffffff;">Contributions (000's)</div>
<div class="t" style="right:1024.03px;transform-origin:100% 0;transform:scaleX(1.6200);top:993.39px;font-size:8.6px;font-weight:bold;font-style:normal;color:#ffffff;">1.200</div>
<div class="t" style="right:1024.03px;transform-origin:100% 0;transform:scaleX(1.6200);top:1015.09px;font-size:8.6px;font-weight:bold;font-style:normal;color:#ffffff;">1.000</div>
<div class="t" style="right:1024.02px;transform-origin:100% 0;transform:scaleX(1.6200);top:1037.09px;font-size:8.6px;font-weight:bold;font-style:normal;color:#ffffff;">800</div>
<div class="t" style="right:1024.02px;transform-origin:100% 0;transform:scaleX(1.6200);top:1059.09px;font-size:8.6px;font-weight:bold;font-style:normal;color:#ffffff;">600</div>
<div class="t" style="right:1024.02px;transform-origin:100% 0;transform:scaleX(1.6200);top:1081.09px;font-size:8.6px;font-weight:bold;font-style:normal;color:#ffffff;">400</div>
<div class="t" style="right:1024.02px;transform-origin:100% 0;transform:scaleX(1.6200);top:1103.09px;font-size:8.6px;font-weight:bold;font-style:normal;color:#ffffff;">200</div>
<div class="t" style="right:1024.03px;transform-origin:100% 0;transform:scaleX(1.6200);top:1123.59px;font-size:8.6px;font-weight:bold;font-style:normal;color:#ffffff;">-</div>
<div class="r" style="left:593.80px;top:1128.30px;width:399.20px;height:1.20px;background:#a9a9a9;"></div>
<div class="r" style="left:634.20px;top:1019.90px;width:53.60px;height:108.40px;background:linear-gradient(90deg,rgba(0,0,0,0.35) 0%,rgba(255,255,255,0.08) 10%,rgba(255,255,255,0.03) 40%,rgba(0,0,0,0.12) 80%,rgba(0,0,0,0.65) 100%),linear-gradient(#34496c,#2a3c5a 40%,#223049);box-shadow:0 0 0 0.6px rgba(10,14,22,0.55), 2px 0 3px rgba(0,0,0,0.2);overflow:hidden"><div style="position:absolute;left:0;top:0;width:100%;height:4px;background:linear-gradient(rgba(0,0,0,0.25),#6d86ad 45%,rgba(255,255,255,0) 100%);clip-path:polygon(0 0,100% 0,calc(100% - 5px) 100%,5px 100%)"></div><div style="position:absolute;left:0;bottom:0;width:100%;height:2px;background:rgba(0,0,0,0.25)"></div></div>
<div class="r" style="left:767.90px;top:1041.90px;width:52.90px;height:86.40px;background:linear-gradient(90deg,rgba(0,0,0,0.35) 0%,rgba(255,255,255,0.08) 10%,rgba(255,255,255,0.03) 40%,rgba(0,0,0,0.12) 80%,rgba(0,0,0,0.65) 100%),linear-gradient(#e2ad2a,#ebb830 50%,#f2c33e);box-shadow:0 0 0 0.6px rgba(10,14,22,0.55), 2px 0 3px rgba(0,0,0,0.2);overflow:hidden"><div style="position:absolute;left:0;top:0;width:100%;height:4px;background:linear-gradient(rgba(0,0,0,0.25),#f8dc6e 45%,rgba(255,255,255,0) 100%);clip-path:polygon(0 0,100% 0,calc(100% - 5px) 100%,5px 100%)"></div><div style="position:absolute;left:0;bottom:0;width:100%;height:2px;background:rgba(0,0,0,0.25)"></div></div>
<div class="r" style="left:900.30px;top:1106.80px;width:53.90px;height:21.50px;background:linear-gradient(90deg,rgba(0,0,0,0.35) 0%,rgba(255,255,255,0.08) 10%,rgba(255,255,255,0.03) 40%,rgba(0,0,0,0.12) 80%,rgba(0,0,0,0.65) 100%),linear-gradient(#1d7a8c,#2896aa 50%,#40b6ca);box-shadow:0 0 0 0.6px rgba(10,14,22,0.55), 2px 0 3px rgba(0,0,0,0.2);overflow:hidden"><div style="position:absolute;left:0;top:0;width:100%;height:4px;background:linear-gradient(rgba(0,0,0,0.25),#6cc6d6 45%,rgba(255,255,255,0) 100%);clip-path:polygon(0 0,100% 0,calc(100% - 5px) 100%,5px 100%)"></div><div style="position:absolute;left:0;bottom:0;width:100%;height:2px;background:rgba(0,0,0,0.25)"></div></div>
<div class="t" style="left:626.76px;transform-origin:33.84px 0;transform:scaleX(1.6888);top:1136.89px;font-size:8.6px;font-weight:bold;font-style:normal;color:#ffffff;">Total Investment</div>
<div class="t" style="left:761.70px;transform-origin:32.40px 0;transform:scaleX(1.6234);top:1136.89px;font-size:8.6px;font-weight:bold;font-style:normal;color:#ffffff;">LP Contribution</div>
<div class="t" style="left:892.59px;transform-origin:34.31px 0;transform:scaleX(1.6466);top:1136.89px;font-size:8.6px;font-weight:bold;font-style:normal;color:#ffffff;">GP Contributiom</div>
<div class="r" style="left:1053.30px;top:969.30px;width:504.00px;height:182.70px;background:radial-gradient(ellipse 60% 70% at 50% 50%, #8a8a8a 0%, #787878 45%, #5e5e5e 100%);"></div>
<div class="t" style="left:1262.28px;transform-origin:43.52px 0;transform:scaleX(1.7890);top:978.45px;font-size:9.0px;font-weight:bold;font-style:normal;color:#ffffff;">Distributions (000;s)</div>
<div class="t" style="right:490.02px;transform-origin:100% 0;transform:scaleX(1.6200);top:994.59px;font-size:8.6px;font-weight:bold;font-style:normal;color:#ffffff;">16.000</div>
<div class="t" style="right:490.02px;transform-origin:100% 0;transform:scaleX(1.6200);top:1010.69px;font-size:8.6px;font-weight:bold;font-style:normal;color:#ffffff;">14.000</div>
<div class="t" style="right:490.02px;transform-origin:100% 0;transform:scaleX(1.6200);top:1027.09px;font-size:8.6px;font-weight:bold;font-style:normal;color:#ffffff;">12.000</div>
<div class="t" style="right:490.02px;transform-origin:100% 0;transform:scaleX(1.6200);top:1043.59px;font-size:8.6px;font-weight:bold;font-style:normal;color:#ffffff;">10.000</div>
<div class="t" style="right:490.03px;transform-origin:100% 0;transform:scaleX(1.6200);top:1060.09px;font-size:8.6px;font-weight:bold;font-style:normal;color:#ffffff;">8.000</div>
<div class="t" style="right:490.03px;transform-origin:100% 0;transform:scaleX(1.6200);top:1076.79px;font-size:8.6px;font-weight:bold;font-style:normal;color:#ffffff;">6.000</div>
<div class="t" style="right:490.03px;transform-origin:100% 0;transform:scaleX(1.6200);top:1092.89px;font-size:8.6px;font-weight:bold;font-style:normal;color:#ffffff;">4.000</div>
<div class="t" style="right:490.03px;transform-origin:100% 0;transform:scaleX(1.6200);top:1109.39px;font-size:8.6px;font-weight:bold;font-style:normal;color:#ffffff;">2.000</div>
<div class="t" style="right:490.03px;transform-origin:100% 0;transform:scaleX(1.6200);top:1125.59px;font-size:8.6px;font-weight:bold;font-style:normal;color:#ffffff;">-</div>
<div class="r" style="left:1129.30px;top:1129.70px;width:411.20px;height:1.20px;background:#a9a9a9;"></div>
<div class="r" style="left:1169.50px;top:1020.70px;width:56.00px;height:109.00px;background:linear-gradient(90deg,rgba(0,0,0,0.35) 0%,rgba(255,255,255,0.08) 10%,rgba(255,255,255,0.03) 40%,rgba(0,0,0,0.12) 80%,rgba(0,0,0,0.65) 100%),linear-gradient(#34496c,#2a3c5a 40%,#223049);box-shadow:0 0 0 0.6px rgba(10,14,22,0.55), 2px 0 3px rgba(0,0,0,0.2);overflow:hidden"><div style="position:absolute;left:0;top:0;width:100%;height:4px;background:linear-gradient(rgba(0,0,0,0.25),#6d86ad 45%,rgba(255,255,255,0) 100%);clip-path:polygon(0 0,100% 0,calc(100% - 5px) 100%,5px 100%)"></div><div style="position:absolute;left:0;bottom:0;width:100%;height:2px;background:rgba(0,0,0,0.25)"></div></div>
<div class="r" style="left:1306.70px;top:1082.30px;width:56.00px;height:47.40px;background:linear-gradient(90deg,rgba(0,0,0,0.35) 0%,rgba(255,255,255,0.08) 10%,rgba(255,255,255,0.03) 40%,rgba(0,0,0,0.12) 80%,rgba(0,0,0,0.65) 100%),linear-gradient(#e2ad2a,#ebb830 50%,#f2c33e);box-shadow:0 0 0 0.6px rgba(10,14,22,0.55), 2px 0 3px rgba(0,0,0,0.2);overflow:hidden"><div style="position:absolute;left:0;top:0;width:100%;height:4px;background:linear-gradient(rgba(0,0,0,0.25),#f8dc6e 45%,rgba(255,255,255,0) 100%);clip-path:polygon(0 0,100% 0,calc(100% - 5px) 100%,5px 100%)"></div><div style="position:absolute;left:0;bottom:0;width:100%;height:2px;background:rgba(0,0,0,0.25)"></div></div>
<div class="r" style="left:1444.30px;top:1068.00px;width:55.30px;height:61.70px;background:linear-gradient(90deg,rgba(0,0,0,0.35) 0%,rgba(255,255,255,0.08) 10%,rgba(255,255,255,0.03) 40%,rgba(0,0,0,0.12) 80%,rgba(0,0,0,0.65) 100%),linear-gradient(#1d7a8c,#2896aa 50%,#40b6ca);box-shadow:0 0 0 0.6px rgba(10,14,22,0.55), 2px 0 3px rgba(0,0,0,0.2);overflow:hidden"><div style="position:absolute;left:0;top:0;width:100%;height:4px;background:linear-gradient(rgba(0,0,0,0.25),#6cc6d6 45%,rgba(255,255,255,0) 100%);clip-path:polygon(0 0,100% 0,calc(100% - 5px) 100%,5px 100%)"></div><div style="position:absolute;left:0;bottom:0;width:100%;height:2px;background:rgba(0,0,0,0.25)"></div></div>
<div class="t" style="left:1159.53px;transform-origin:37.67px 0;transform:scaleX(1.6632);top:1137.39px;font-size:8.6px;font-weight:bold;font-style:normal;color:#ffffff;">Total Distributions</div>
<div class="t" style="left:1304.16px;transform-origin:30.75px 0;transform:scaleX(1.6230);top:1137.39px;font-size:8.6px;font-weight:bold;font-style:normal;color:#ffffff;">LP Distribution</div>
<div class="t" style="left:1440.65px;transform-origin:31.45px 0;transform:scaleX(1.6405);top:1137.39px;font-size:8.6px;font-weight:bold;font-style:normal;color:#ffffff;">GP Distribution</div>
</body></html>
